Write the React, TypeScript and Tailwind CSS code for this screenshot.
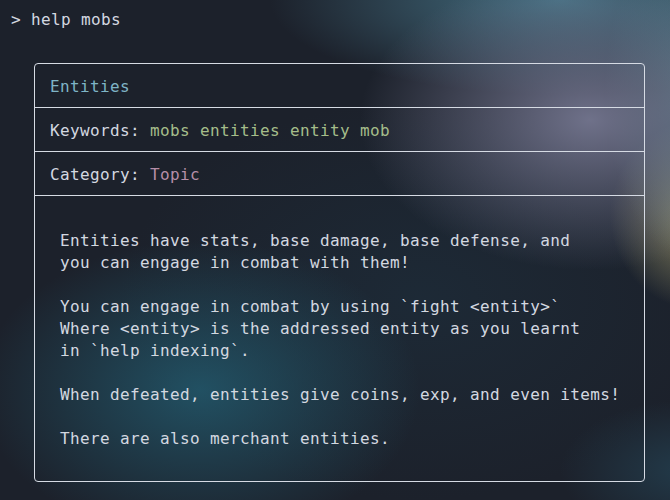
import React from "react";

const body = ` Entities have stats, base damage, base defense, and
 you can engage in combat with them!

 You can engage in combat by using \`fight <entity>\`
 Where <entity> is the addressed entity as you learnt
 in \`help indexing\`.

 When defeated, entities give coins, exp, and even items!

 There are also merchant entities.`;

export default function App() {
  return (
    <div
      className="relative w-[670px] h-[500px] overflow-hidden bg-[#1c212b] bg-[radial-gradient(ellipse_230px_150px_at_590px_120px,rgba(120,122,148,0.9),transparent),radial-gradient(ellipse_290px_95px_at_560px_0px,rgba(75,125,145,0.85),transparent),radial-gradient(ellipse_90px_170px_at_695px_90px,rgba(95,140,150,0.7),transparent),radial-gradient(ellipse_90px_95px_at_700px_215px,rgba(185,175,120,0.75),transparent),radial-gradient(ellipse_220px_150px_at_200px_390px,rgba(35,92,112,0.8),transparent),radial-gradient(ellipse_130px_70px_at_690px_470px,rgba(40,80,100,0.55),transparent),radial-gradient(ellipse_300px_200px_at_420px_300px,rgba(30,50,65,0.5),transparent)] text-[#d3d8e0] font-['DejaVu_Sans_Mono',monospace] text-[16px] leading-[22px] tracking-[0.37px]"
    >
      <div className="pt-[9px] pl-[11px] whitespace-pre">{"> help mobs"}</div>
      <div className="mt-[32px] ml-[34px] w-[611px] h-[419px] border border-[#d6dbe4] rounded-[4px] flex flex-col">
        <div className="h-[44px] pt-[2px] border-b border-[#d6dbe4] flex items-center px-[15px] text-[#7fb4c6]">
          Entities
        </div>
        <div className="h-[44px] pt-[2px] border-b border-[#d6dbe4] flex items-center px-[15px] whitespace-pre">
          <span>Keywords: </span>
          <span className="text-[#a5bd8a]">mobs entities entity mob</span>
        </div>
        <div className="h-[44px] pt-[2px] border-b border-[#d6dbe4] flex items-center px-[15px] whitespace-pre">
          <span>Category: </span>
          <span className="text-[#b68ea8]">Topic</span>
        </div>
        <div className="flex-1 px-[15px] pt-[34px] whitespace-pre">{body}</div>
      </div>
    </div>
  );
}
